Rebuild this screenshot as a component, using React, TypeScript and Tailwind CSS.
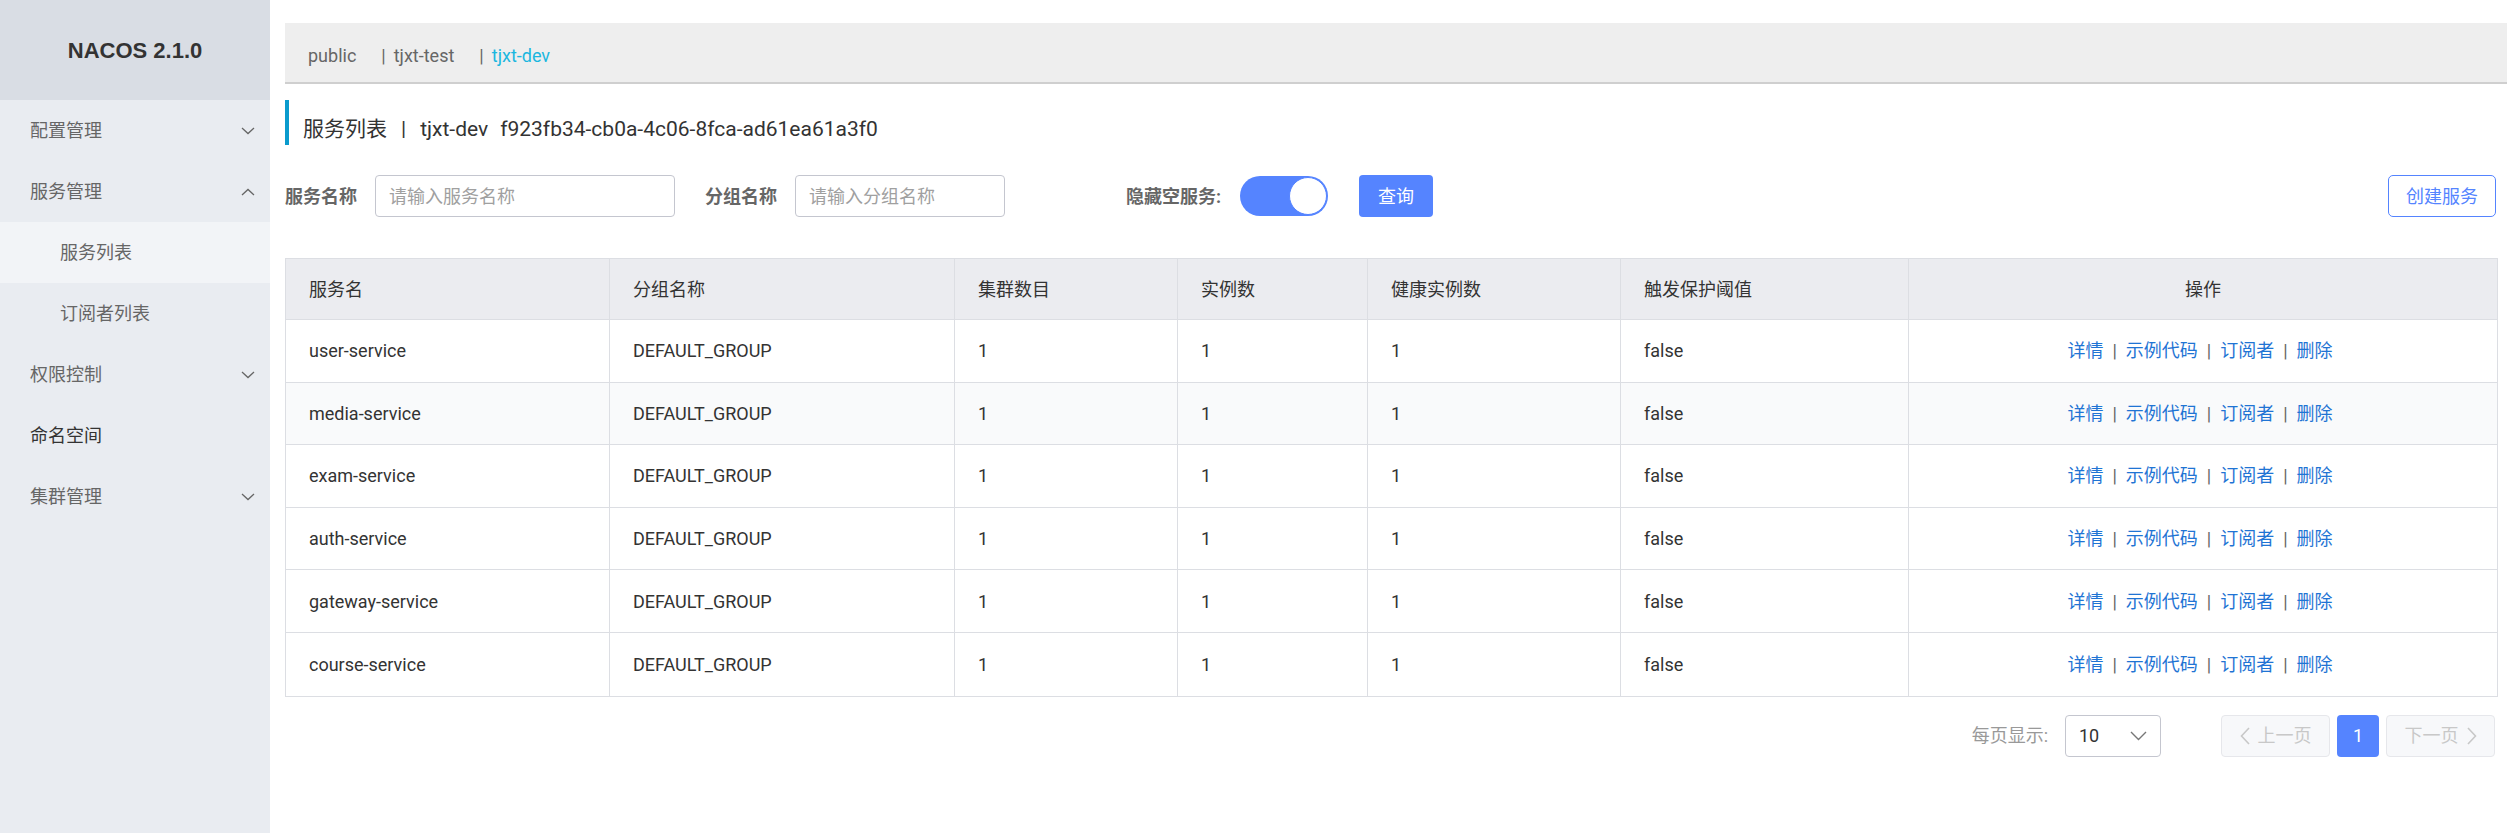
import React from "react"

const menu = [
  { label: "配置管理", arrow: "down" },
  { label: "服务管理", arrow: "up" },
  { label: "服务列表", sub: true, active: true },
  { label: "订阅者列表", sub: true },
  { label: "权限控制", arrow: "down" },
  { label: "命名空间", dark: true },
  { label: "集群管理", arrow: "down" },
]

const services = [
  "user-service",
  "media-service",
  "exam-service",
  "auth-service",
  "gateway-service",
  "course-service",
]

const headers = ["服务名", "分组名称", "集群数目", "实例数", "健康实例数", "触发保护阈值", "操作"]

function Chevron({ up }: { up?: boolean }) {
  return (
    <svg width="14" height="8" viewBox="0 0 14 8" fill="none" className="text-[#666]">
      <path d={up ? "M1 7L7 1.5L13 7" : "M1 1L7 6.5L13 1"} stroke="currentColor" strokeWidth="1.3" />
    </svg>
  )
}

export default function App() {
  return (
    <div className="flex w-[2507px] h-[833px] overflow-hidden bg-white font-['Roboto','Noto_Sans_CJK_SC',sans-serif]">
      {/* sidebar */}
      <aside className="w-[270px] shrink-0 h-full bg-[#e9ecf1]">
        <div className="h-[100px] bg-[#d9dde4] flex items-center justify-center font-['Liberation_Sans',sans-serif] font-bold text-[22px] text-[#333]">
          NACOS 2.1.0
        </div>
        {menu.map((m) => (
          <div
            key={m.label}
            className={`h-[61px] flex items-center justify-between pr-[15px] text-[18px] ${
              m.sub ? "pl-[60px]" : "pl-[30px]"
            } ${m.active ? "bg-[#f2f4f7]" : ""} ${m.dark ? "text-[#333]" : "text-[#666]"}`}
          >
            <span>{m.label}</span>
            {m.arrow && <Chevron up={m.arrow === "up"} />}
          </div>
        ))}
      </aside>

      {/* main */}
      <main className="flex-1 pl-[15px] pr-[9px] pt-[23px]">
        {/* namespace tabs */}
        <div className="-mr-[9px] h-[61px] bg-[#eeeeee] border-b-2 border-[#cfcfcf] flex items-center pl-[23px] pt-[5px] text-[18px] text-[#666]">
          <span>public</span>
          <span className="ml-[25px]">|</span>
          <span className="ml-[8px]">tjxt-test</span>
          <span className="ml-[25px]">|</span>
          <span className="ml-[8px] text-[#1bb7df]">tjxt-dev</span>
        </div>

        {/* title */}
        <div className="mt-[16px] h-[45px] border-l-4 border-[#0a9bcd] pl-[14px] pt-[14px] flex items-center text-[21px] text-[#333]">
          <span>服务列表</span>
          <span className="mx-[14px]">|</span>
          <span>tjxt-dev</span>
          <span className="ml-[12px]">f923fb34-cb0a-4c06-8fca-ad61ea61a3f0</span>
        </div>

        {/* filters */}
        <div className="mt-[30px] h-[42px] flex items-center text-[18px]">
          <span className="font-bold text-[#666]">服务名称</span>
          <div className="ml-[18px] w-[300px] h-[42px] border border-[#c4c6cf] rounded-[4px] flex items-center pl-[13px] text-[#a0a0a0]">
            请输入服务名称
          </div>
          <span className="ml-[30px] font-bold text-[#666]">分组名称</span>
          <div className="ml-[18px] w-[210px] h-[42px] border border-[#c4c6cf] rounded-[4px] flex items-center pl-[13px] text-[#a0a0a0]">
            请输入分组名称
          </div>
          <span className="ml-[121px] font-bold text-[#666]">隐藏空服务:</span>
          <div className="ml-[19px] w-[88px] h-[40px] rounded-full bg-[#5584ff] relative">
            <div className="absolute right-[1px] top-[1px] w-[38px] h-[38px] rounded-full bg-white border border-[#5584ff]" />
          </div>
          <div className="ml-[31px] w-[74px] h-[42px] rounded-[4px] bg-[#5584ff] text-white flex items-center justify-center">
            查询
          </div>
          <div className="ml-auto mr-[2px] w-[108px] h-[42px] rounded-[5px] border border-[#5584ff] text-[#5584ff] flex items-center justify-center">
            创建服务
          </div>
        </div>

        {/* table */}
        <div className="mt-[41px] border border-[#dcdee3] text-[18px] text-[#333]">
          <div className="grid grid-cols-[324px_345px_223px_190px_253px_288px_1fr] h-[61px] bg-[#ebecf0] border-b border-[#dcdee3]">
            {headers.map((h, i) => (
              <div
                key={h}
                className={`flex items-center ${i === 6 ? "justify-center" : "pl-[23px] border-r border-[#dcdee3]"}`}
              >
                {h}
              </div>
            ))}
          </div>
          {services.map((s, r) => (
            <div
              key={s}
              className={`grid grid-cols-[324px_345px_223px_190px_253px_288px_1fr] h-[62.6px] ${
                r < services.length - 1 ? "border-b border-[#dcdee3]" : ""
              } ${r === 1 ? "bg-[#f9fafb]" : ""}`}
            >
              {[s, "DEFAULT_GROUP", "1", "1", "1", "false"].map((c, i) => (
                <div key={i} className="flex items-center pl-[23px] border-r border-[#dcdee3]">
                  {c}
                </div>
              ))}
              <div className="flex items-center justify-center pr-[6px]">
                <span className="text-[#1f74d4]">详情</span>
                <span className="mx-[9px] text-[#666]">|</span>
                <span className="text-[#1f74d4]">示例代码</span>
                <span className="mx-[9px] text-[#666]">|</span>
                <span className="text-[#1f74d4]">订阅者</span>
                <span className="mx-[9px] text-[#666]">|</span>
                <span className="text-[#1f74d4]">删除</span>
              </div>
            </div>
          ))}
        </div>

        {/* pagination */}
        <div className="mt-[18px] flex items-center justify-end pr-[3px] text-[18px]">
          <span className="text-[#999]">每页显示:</span>
          <div className="ml-[17px] w-[96px] h-[42px] border border-[#c4c6cf] rounded-[4px] flex items-center justify-between pl-[13px] pr-[13px] text-[#333]">
            <span>10</span>
            <svg width="17" height="10" viewBox="0 0 17 10" fill="none" className="text-[#777]">
              <path d="M1 1L8.5 8.5L16 1" stroke="currentColor" strokeWidth="1.4" />
            </svg>
          </div>
          <div className="ml-[60px] w-[109px] h-[42px] border border-[#e6e7eb] bg-[#f7f8fa] rounded-[4px] flex items-center justify-center gap-[8px] text-[#c8c8c8]">
            <svg width="10" height="18" viewBox="0 0 10 18" fill="none">
              <path d="M9 1L1.5 9L9 17" stroke="currentColor" strokeWidth="1.6" />
            </svg>
            <span>上一页</span>
          </div>
          <div className="ml-[7px] w-[42px] h-[42px] rounded-[4px] bg-[#5584ff] text-white flex items-center justify-center">
            1
          </div>
          <div className="ml-[7px] w-[109px] h-[42px] border border-[#e6e7eb] bg-[#f7f8fa] rounded-[4px] flex items-center justify-center gap-[8px] text-[#c8c8c8]">
            <span>下一页</span>
            <svg width="10" height="18" viewBox="0 0 10 18" fill="none">
              <path d="M1 1L8.5 9L1 17" stroke="currentColor" strokeWidth="1.6" />
            </svg>
          </div>
        </div>
      </main>
    </div>
  )
}
